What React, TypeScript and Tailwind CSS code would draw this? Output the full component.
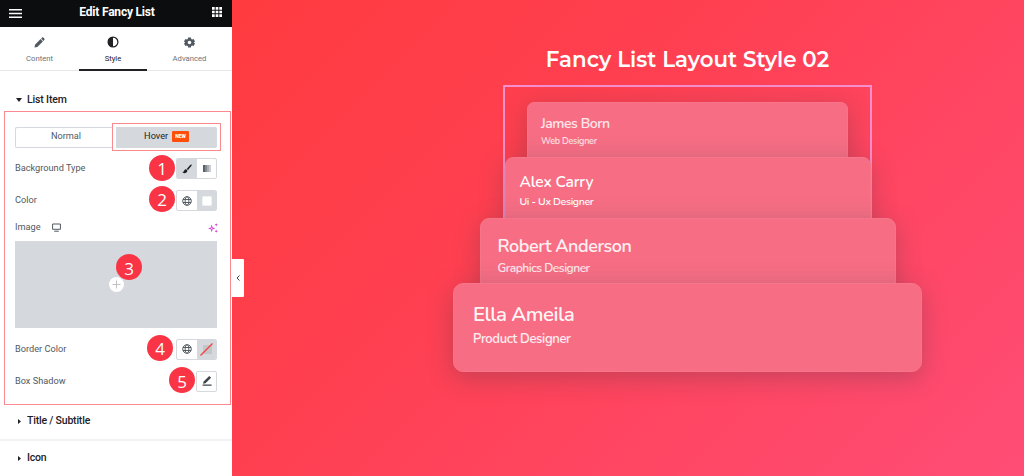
import React from "react";
import clsx from "clsx";

interface FancyItem {
  name: string;
  role: string;
  card: string;
  title: string;
  subtitle: string;
}

const items: FancyItem[] = [
  {
    name: "James Born",
    role: "Web Designer",
    card: "w-[321px] h-[64px] pl-[13px] pt-[12px] rounded-[7px]",
    title: "text-[14px] leading-[18px] tracking-[-0.45px] text-white/85",
    subtitle: "text-[9px] leading-[14px] mt-px tracking-[-0.25px] text-white/80",
  },
  {
    name: "Alex Carry",
    role: "Ui - Ux Designer",
    card: "w-[366px] h-[70px] -mt-[9px] pl-[14px] pt-[14px] rounded-[8px]",
    title: "text-[15.5px] leading-[20px] tracking-[-0.15px] text-white",
    subtitle: "text-[10.5px] leading-[15px] mt-[2px] tracking-[-0.35px] text-white",
  },
  {
    name: "Robert Anderson",
    role: "Graphics Designer",
    card: "w-[416px] h-[74px] -mt-[9px] pl-[17px] pt-[16px] rounded-[9px]",
    title: "text-[18px] leading-[22px] tracking-[-0.45px] text-white/90",
    subtitle: "text-[12px] leading-[16px] mt-[3px] tracking-[-0.48px] text-white/85",
  },
  {
    name: "Ella Ameila",
    role: "Product Designer",
    card: "w-[469px] h-[89px] -mt-[9px] pl-[19px] pt-[18px] rounded-[10px]",
    title: "text-[20.5px] leading-[25px] tracking-[-0.55px] text-white/95",
    subtitle: "text-[13px] leading-[17px] mt-[4px] tracking-[-0.33px] text-white/90",
  },
];

function Step({ n, className }: { n: number; className?: string }) {
  return (
    <span
      className={clsx(
        "flex h-[26px] w-[26px] shrink-0 items-center justify-center rounded-full bg-[#f93545] pt-[2px] font-['Open_Sans',sans-serif] text-[17px] leading-none text-white",
        className
      )}
    >
      {n}
    </span>
  );
}

function GlobeIcon() {
  return (
    <svg width="10" height="10" viewBox="0 0 10 10" fill="none" stroke="#4a5159" strokeWidth="0.9">
      <circle cx="5" cy="5" r="4.3" />
      <ellipse cx="5" cy="5" rx="1.9" ry="4.3" />
      <path d="M1 3.5h8M1 6.5h8" />
    </svg>
  );
}

function BrushIcon() {
  return (
    <svg width="10" height="10" viewBox="0 0 10 10">
      <path d="M9.4.5c.5.4.3.9-.1 1.4L6 6 4.7 4.9 8.2 1c.4-.5.8-.8 1.2-.5z" fill="#1f2124" />
      <path d="M4.2 5.3 5.4 6.4C5.3 8.2 4 9.2 2.3 9.2 1.3 9.2.7 8.6.4 7.8c1 .3 1.5-.1 1.7-1 .3-1 1.1-1.6 2.1-1.5z" fill="#1f2124" />
    </svg>
  );
}

function GradientIcon() {
  return (
    <svg width="8" height="7" viewBox="0 0 8 7">
      <path d="M0 0h2v7H0z" fill="#5a6068" />
      <path d="M2 0h2v7H2z" fill="#858a90" />
      <path d="M4 0h2v7H4z" fill="#a9adb2" />
      <path d="M6 0h2v7H6z" fill="#c9ccd0" />
    </svg>
  );
}

function Panel() {
  return (
    <aside className="flex h-full w-[232px] shrink-0 flex-col bg-white font-[Roboto,sans-serif]">
      <header className="flex h-[27px] items-center justify-between bg-[#0c0d0e] pb-[3px] pl-[9px] pr-[10px]">
        <svg width="13" height="9" viewBox="0 0 13 9" className="mt-[2px]">
          <path d="M0 0h13v1.5H0zM0 3.75h13v1.5H0zM0 7.5h13V9H0z" fill="#fff" />
        </svg>
        <h1 className="text-[12px] font-bold tracking-[-0.2px] text-white">Edit Fancy List</h1>
        <svg width="10" height="10" viewBox="0 0 10 10" fill="#fff">
          <path d="M0 0h2.7v2.7H0zM3.65 0h2.7v2.7h-2.7zM7.3 0H10v2.7H7.3zM0 3.65h2.7v2.7H0zM3.65 3.65h2.7v2.7h-2.7zM7.3 3.65H10v2.7H7.3zM0 7.3h2.7V10H0zM3.65 7.3h2.7V10h-2.7zM7.3 7.3H10V10H7.3z" />
        </svg>
      </header>

      {/* Tabs */}
      <nav className="flex h-[44px] shrink-0 border-b border-[#e6e8ea] text-[7.7px] leading-[10px] text-[#69727d]">
        <div className="flex w-[79px] flex-col items-center pt-[10px]">
          <svg width="11" height="11" viewBox="0 0 11 11" fill="#515962">
            <path d="M8 .7c.5-.5 1-.5 1.5 0l.8.8c.5.5.5 1 0 1.5l-.9.9L7.1 1.6zM6.6 2.1 8.9 4.4 3.3 10 .5 10.5 1 7.7z" />
          </svg>
          <span className="mt-[6px]">Content</span>
        </div>
        <div className="-mb-px flex w-[68px] flex-col items-center border-b-2 border-[#1f2124] pt-[9px] text-[#1f2124]">
          <svg width="12" height="12" viewBox="0 0 12 12">
            <circle cx="6" cy="6" r="4.9" fill="none" stroke="#1f2124" strokeWidth="1.2" />
            <path d="M6 1a5 5 0 0 0 0 10z" fill="#1f2124" />
          </svg>
          <span className="mt-[6px]">Style</span>
        </div>
        <div className="flex w-[85px] flex-col items-center pt-[10px]">
          <svg width="11" height="11" viewBox="0 0 24 24" fill="#515962">
            <path
              fillRule="evenodd"
              d="M9 1h6l.8 3.3 1.9 1.1 3.3-1 3 5.2-2.5 2.4 2.5 2.4-3 5.2-3.3-1-1.9 1.1L15 23H9l-.8-3.3-1.9-1.1-3.3 1-3-5.2L2.500 12 0 9.600l3-5.200 3.300 1 1.900-1.100zM12 8a4 4 0 1 0 0 8 4 4 0 0 0 0-8z"
            />
          </svg>
          <span className="mt-[6px]">Advanced</span>
        </div>
      </nav>

      <div className="flex h-[40px] shrink-0 items-center gap-[5px] pl-[16px] pt-[18px] text-[10.5px] font-medium tracking-[-0.15px] text-[#1f2124]">
        <svg width="6" height="4" viewBox="0 0 6 4">
          <path d="M0 0h6L3 4z" fill="#1f2124" />
        </svg>
        List Item
      </div>

      {/* List item controls */}
      <section className="ml-[4px] flex h-[294px] w-[227px] shrink-0 flex-col border border-[#fb8a90] pl-[10px] text-[9.2px] text-[#515962]">
        <div className="flex items-center pt-[11px]">
          <div className="flex h-[21px] w-[97px] items-center justify-center rounded-l-[2px] border border-r-0 border-[#d5d8dc] pb-[3px] pl-[4px]">
            Normal
          </div>
          <div className="flex h-[28px] w-[109px] items-center justify-center border border-[#fb8a90] px-[3px]">
            <div className="flex h-[21px] w-full items-center justify-center gap-[4px] rounded-r-[2px] bg-[#d5d8dc] pb-[3px] text-[#1f2124]">
              Hover
              <span className="mt-[2px] rounded-[1px] bg-[#ff4f0a] px-[3px] text-[5px] leading-[11px] font-black text-white">
                NEW
              </span>
            </div>
          </div>
        </div>

        <div className="mt-[2px] flex h-[32px] items-center pr-[13px]">
          <span className="-mt-[2px] flex-1">Background Type</span>
          <Step n={1} className="-mt-[3px] mr-[1px]" />
          <div className="-mt-px flex h-[21px] w-[41px] overflow-hidden rounded-[2px] border border-[#d5d8dc]">
            <span className="flex w-[20px] items-center justify-center bg-[#d5d8dc]">
              <BrushIcon />
            </span>
            <span className="flex flex-1 items-center justify-center">
              <GradientIcon />
            </span>
          </div>
        </div>

        <div className="flex h-[32px] items-center pr-[13px]">
          <span className="-mt-[2px] flex-1">Color</span>
          <Step n={2} className="-mt-[5px] mr-[1px]" />
          <div className="-mt-px flex h-[21px] w-[41px] overflow-hidden rounded-[2px] border border-[#d5d8dc]">
            <span className="flex w-[20px] items-center justify-center">
              <GlobeIcon />
            </span>
            <span className="flex flex-1 items-center justify-center bg-[#d5d8dc]">
              <span className="h-[10px] w-[10px] rounded-[1px] border border-dashed border-[#eceef0] bg-white" />
            </span>
          </div>
        </div>

        <div className="flex h-[22px] items-center pr-[12px]">
          <span className="-mt-[2px]">Image</span>
          <svg width="9" height="9" viewBox="0 0 9 9" className="-mt-px ml-[11px] flex-none" fill="none" stroke="#515962">
            <path d="M.6 1h7.8v5.3H.6zM2.2 8.2h4.6" />
          </svg>
          <svg width="10" height="10" viewBox="0 0 10 10" className="ml-auto" fill="#d53bd8">
            <path
              fillRule="evenodd"
              d="M3.7 1.6 4.6 4.5 7.4 5.4 4.6 6.3 3.7 9.2 2.8 6.3 0 5.4 2.8 4.5zM3.7 4.3 3.4 5.1 2.6 5.4 3.4 5.7 3.7 6.5 4 5.7 4.8 5.4 4 5.1z"
            />
            <path d="M8.2.2 8.7 1.3 9.8 1.8 8.7 2.3 8.2 3.4 7.7 2.3 6.6 1.8 7.7 1.3zM8.2 6.6 8.7 7.7 9.8 8.2 8.7 8.7 8.2 9.8 7.7 8.7 6.6 8.2 7.7 7.7z" />
          </svg>
        </div>

        {/* Image dropzone */}
        <div className="relative mt-[2px] flex h-[87px] w-[202px] shrink-0 items-center justify-center bg-[#d5d8dc]">
          <span className="flex h-[15px] w-[15px] items-center justify-center rounded-full bg-white">
            <svg width="9" height="9" viewBox="0 0 9 9" stroke="#bfc3c8" strokeWidth="1">
              <path d="M4.5.5v8M.5 4.5h8" />
            </svg>
          </span>
          <Step n={3} className="absolute left-[101px] top-[13px]" />
        </div>

        <div className="mt-[5px] flex h-[32px] items-center pr-[13px]">
          <span className="flex-1">Border Color</span>
          <Step n={4} className="-mt-[3px] mr-[3px]" />
          <div className="flex h-[21px] w-[41px] overflow-hidden rounded-[2px] border border-[#d5d8dc]">
            <span className="flex w-[20px] items-center justify-center">
              <GlobeIcon />
            </span>
            <span className="flex flex-1 items-center justify-center bg-[#d5d8dc]">
              <svg width="13" height="13" viewBox="0 0 13 13">
                <path d="M3 2h9v9H3z" fill="#c4c6c9" />
                <path d="M.5 12.5 12.5.5" stroke="#f0403f" strokeWidth="1.3" />
              </svg>
            </span>
          </div>
        </div>

        <div className="flex h-[32px] items-center pr-[13px]">
          <span className="flex-1">Box Shadow</span>
          <Step n={5} className="-mt-[2px] mr-[1px]" />
          <span className="flex h-[21px] w-[21px] items-center justify-center rounded-[2px] border border-[#d5d8dc]">
            <svg width="10" height="10" viewBox="0 0 10 10" fill="#3f444b">
              <path d="M7.3 0 9.1 1.7 3.5 7.3 1 7.8 1.6 5.5zM.6 8.5h9v1.3h-9z" />
            </svg>
          </span>
        </div>
      </section>

      {["Title / Subtitle", "Icon"].map((label, i) => (
        <div
          key={label}
          className={clsx(
            "flex shrink-0 items-center gap-[6px] pl-[18px] text-[10.5px] font-medium tracking-[-0.2px] text-[#1f2124]",
            i === 0 ? "h-[36px] border-b-2 border-[#f1f2f3] pb-[2px]" : "h-[34px]"
          )}
        >
          <svg width="3" height="5" viewBox="0 0 3 5">
            <path d="M0 0v5l3-2.5z" fill="#1f2124" />
          </svg>
          {label}
        </div>
      ))}
    </aside>
  );
}

export default function App() {
  return (
    <div className="flex h-[476px] w-[1024px] overflow-hidden">
      <Panel />
      <main className="relative flex flex-1 flex-col items-center bg-linear-[135deg,#ff3b3f_0%,#ff4052_40%,#ff4d76_100%] pl-[119px]">
        <button className="absolute left-0 top-[259px] flex h-[38px] w-[12px] items-center justify-center rounded-r-[1px] bg-white">
          <svg width="4" height="6" viewBox="0 0 4 6" fill="none" stroke="#3f444b" strokeWidth="1">
            <path d="M3.5.5 1 3l2.5 2.5" />
          </svg>
        </button>

        <h2 className="mt-[45px] h-[28px] whitespace-nowrap font-['Montserrat',Inter,sans-serif] text-[21.35px] leading-[28px] font-semibold text-white">
          Fancy List Layout Style 02
        </h2>

        {/* Selected widget, the lower cards run past its frame */}
        <div className="mt-[12px] flex h-[250px] w-[369px] flex-col items-center border-2 border-[#f78fce] pt-[15px] font-['Nunito','Noto_Sans',sans-serif]">
          {items.map((item) => (
            <article
              key={item.name}
              className={clsx(
                "shrink-0 border border-[#f7748a] bg-[#f76e84] shadow-[0_6px_26px_rgba(60,60,70,0.3)]",
                item.card
              )}
            >
              <h3 className={clsx("font-[650] whitespace-nowrap", item.title)}>{item.name}</h3>
              <p className={clsx("font-[650] whitespace-nowrap", item.subtitle)}>{item.role}</p>
            </article>
          ))}
        </div>
      </main>
    </div>
  );
}
